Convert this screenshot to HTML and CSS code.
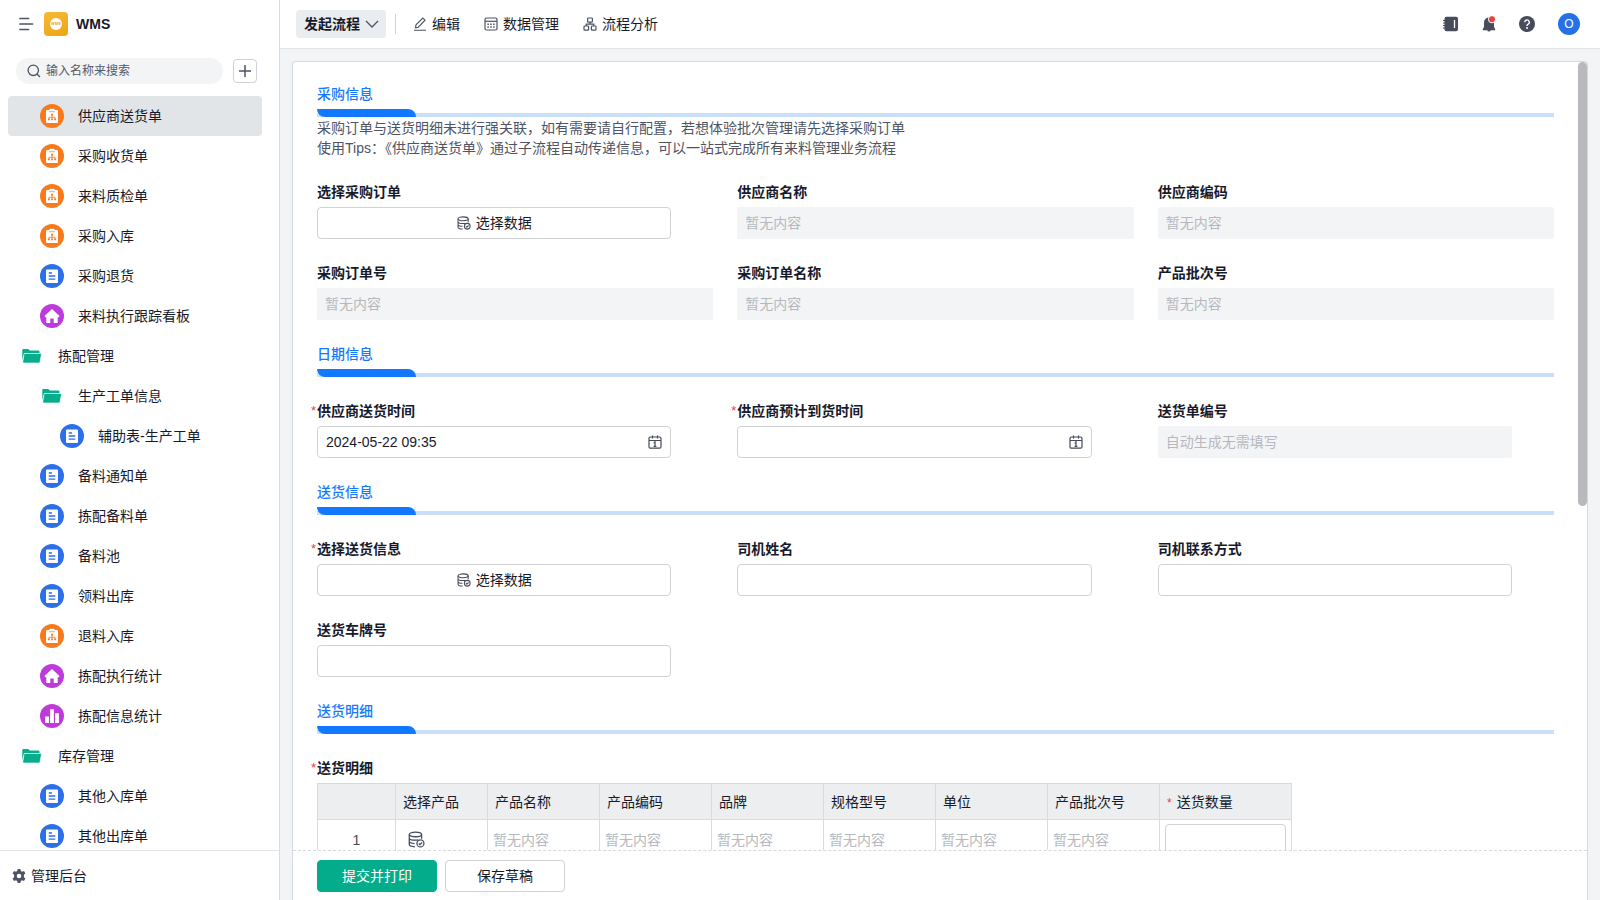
FILE: index.html
```html
<!DOCTYPE html>
<html lang="zh-CN">
<head>
<meta charset="utf-8">
<meta name="viewport" content="width=device-width, initial-scale=1">
<title>WMS</title>
<link rel="stylesheet" href="styles.css">
</head>
<body>
<svg class="sprite" aria-hidden="true">
  <symbol id="i-flow" viewBox="0 0 24 24">
    <circle cx="12" cy="12" r="12" fill="#f9791d"/>
    <path d="M7 6h10a1 1 0 0 1 1 1v11a1 1 0 0 1-1 1H7a1 1 0 0 1-1-1V7a1 1 0 0 1 1-1z" fill="#fff"/>
    <path d="M9.500 4.800h5v2.400h-5z" fill="#fff"/>
    <path d="M9 7.700h6" stroke="#f9791d" stroke-width=".7"/>
    <path d="M12 11v3.500M8.900 15v-1.700h6.200V15" fill="none" stroke="#f9791d" stroke-width=".8"/>
    <path d="M11 9.800h2v1.700h-2zM8 14.600h1.800v1.700H8zM11.100 14.600h1.800v1.700h-1.800zM14.200 14.600H16v1.700h-1.800z" fill="#f9791d"/>
  </symbol>
  <symbol id="i-form" viewBox="0 0 24 24">
    <circle cx="12" cy="12" r="12" fill="#2c6fe6"/>
    <rect x="6" y="5.500" width="12" height="13.500" rx="1" fill="#fff"/>
    <path d="M8.700 9h3.300M8.700 12h6.600M8.700 15.200h6.600" stroke="#2c6fe6" stroke-width="1.300"/>
  </symbol>
  <symbol id="i-home" viewBox="0 0 24 24">
    <circle cx="12" cy="12" r="12" fill="#bd3bdb"/>
    <path d="M12 5l7.500 7-.8 1.200H17.700V19h-4v-4.500h-3.400V19h-4v-5.800H5.300L4.500 12z" fill="#fff"/>
  </symbol>
  <symbol id="i-chart" viewBox="0 0 24 24">
    <circle cx="12" cy="12" r="12" fill="#bd3bdb"/>
    <path d="M5.200 12.500h3.800V19H5.200zM10.100 5.200h3.800V19h-3.800zM15.100 9.200h3.800V19h-3.800z" fill="#fff"/>
  </symbol>
  <symbol id="i-folder" viewBox="0 0 24 24">
    <path d="M2.300 6a1 1 0 0 1 1-1h5l1.500 1.500H18.500a1 1 0 0 1 1 1V9H4.300L2.300 16z" fill="#08ae8b"/>
    <path d="M4.800 9.500H20.600a.8.8 0 0 1 .8 1L20 18a1.200 1.200 0 0 1-1.200 1H3.800a1 1 0 0 1-1-1.200l1.200-7.500a1 1 0 0 1 .8-.8z" fill="#08ae8b" stroke="#fff" stroke-width=".6"/>
  </symbol>
  <symbol id="i-data" viewBox="0 0 16 16">
    <g fill="none" stroke="currentColor" stroke-width="1.200">
      <ellipse cx="7" cy="3.200" rx="5.800" ry="2.200"/>
      <path d="M1.200 3.200v9.600c0 1.100 2.400 2 5.300 2.100M12.800 3.200v4M1.200 6.500c0 1.200 2.600 2.100 5.800 2.100 1 0 1.800-.1 2.500-.3M1.200 9.700c0 1.100 2.200 2 5 2.100"/>
      <circle cx="11.700" cy="11.700" r="3.300"/>
      <path d="M10.200 11.700l1.100 1.100 1.900-2"/>
    </g>
  </symbol>
  <symbol id="i-calendar" viewBox="0 0 16 16">
    <g fill="none" stroke="currentColor" stroke-width="1.200">
      <rect x="2" y="3" width="12" height="11.200" rx="1.500"/>
      <path d="M2 6.500h12M5.500 1.500v3M10.500 1.500v3M6.600 8.800H8M8 6.500v6M6.600 12.300h2.800"/>
    </g>
  </symbol>
</svg>

<div class="app">
  <aside class="sidebar">
    <header class="brand">
      <button class="icon-btn" type="button" aria-label="收起菜单">
        <svg width="16" height="16" viewBox="0 0 16 16"><path d="M2 2.500h8.500M2 8h12.500M2 13.500h8.500" stroke="#4d5362" stroke-width="1.700" stroke-linecap="round"/></svg>
      </button>
      <span class="logo"><span class="logo-mark">WMS</span></span>
      <strong class="brand-name">WMS</strong>
    </header>

    <div class="search-row">
      <label class="search">
        <svg width="14" height="14" viewBox="0 0 14 14" fill="none" stroke="#4d5362" stroke-width="1.300"><circle cx="6.300" cy="6.300" r="5.200"/><path d="M10 10l3 3"/></svg>
        <input type="search" placeholder="输入名称来搜索" aria-label="输入名称来搜索">
      </label>
      <button class="add" type="button" aria-label="新增">
        <svg width="14" height="14" viewBox="0 0 14 14"><path d="M7 1v12M1 7h12" stroke="#4d5362" stroke-width="1.500"/></svg>
      </button>
    </div>

    <nav class="tree">
      <a class="node depth-1 active" href="#"><svg class="node-icon"><use href="#i-flow"/></svg>供应商送货单</a>
      <a class="node depth-1" href="#"><svg class="node-icon"><use href="#i-flow"/></svg>采购收货单</a>
      <a class="node depth-1" href="#"><svg class="node-icon"><use href="#i-flow"/></svg>来料质检单</a>
      <a class="node depth-1" href="#"><svg class="node-icon"><use href="#i-flow"/></svg>采购入库</a>
      <a class="node depth-1" href="#"><svg class="node-icon"><use href="#i-form"/></svg>采购退货</a>
      <a class="node depth-1" href="#"><svg class="node-icon"><use href="#i-home"/></svg>来料执行跟踪看板</a>
      <a class="node" href="#"><svg class="node-icon"><use href="#i-folder"/></svg>拣配管理</a>
      <a class="node depth-1" href="#"><svg class="node-icon"><use href="#i-folder"/></svg>生产工单信息</a>
      <a class="node depth-2" href="#"><svg class="node-icon"><use href="#i-form"/></svg>辅助表-生产工单</a>
      <a class="node depth-1" href="#"><svg class="node-icon"><use href="#i-form"/></svg>备料通知单</a>
      <a class="node depth-1" href="#"><svg class="node-icon"><use href="#i-form"/></svg>拣配备料单</a>
      <a class="node depth-1" href="#"><svg class="node-icon"><use href="#i-form"/></svg>备料池</a>
      <a class="node depth-1" href="#"><svg class="node-icon"><use href="#i-form"/></svg>领料出库</a>
      <a class="node depth-1" href="#"><svg class="node-icon"><use href="#i-flow"/></svg>退料入库</a>
      <a class="node depth-1" href="#"><svg class="node-icon"><use href="#i-home"/></svg>拣配执行统计</a>
      <a class="node depth-1" href="#"><svg class="node-icon"><use href="#i-chart"/></svg>拣配信息统计</a>
      <a class="node" href="#"><svg class="node-icon"><use href="#i-folder"/></svg>库存管理</a>
      <a class="node depth-1" href="#"><svg class="node-icon"><use href="#i-form"/></svg>其他入库单</a>
      <a class="node depth-1" href="#"><svg class="node-icon"><use href="#i-form"/></svg>其他出库单</a>
    </nav>

    <a class="admin" href="#">
      <svg width="14" height="14" viewBox="0 0 14 14"><path fill-rule="evenodd" fill="#4d5362" d="M5.600 0h2.800l.4 1.900 1.300.8 1.900-.6 1.400 2.400-1.500 1.300v2.400l1.500 1.300-1.400 2.400-1.900-.6-1.300.8-.4 1.900H5.600l-.4-1.900-1.300-.8-1.900.6L.6 9.500l1.500-1.300V5.800L.6 4.500 2 2.100l1.900.6 1.300-.8zM7 4.700a2.300 2.300 0 1 0 0 4.600 2.300 2.300 0 0 0 0-4.600z"/></svg>
      管理后台
    </a>
  </aside>

  <div class="main">
    <header class="topbar">
      <button class="start" type="button">发起流程
        <svg width="14" height="14" viewBox="0 0 14 14"><path d="M1 4l6 6 6-6" fill="none" stroke="#4d5362" stroke-width="1.300"/></svg>
      </button>
      <span class="divider"></span>
      <nav class="tabs">
        <a class="tab" href="#"><svg width="14" height="14" viewBox="0 0 14 14" fill="none" stroke="#4d5362" stroke-width="1.100"><path d="M1 13.300h12M2.500 10.800l.5-3L9.800 1l2.200 2.200-6.700 7z"/></svg>编辑</a>
        <a class="tab" href="#"><svg width="14" height="14" viewBox="0 0 14 14" fill="none" stroke="#4d5362" stroke-width="1.200"><rect x="1" y="1" width="12" height="12" rx="1.500"/><path d="M1 4.300h12"/><path d="M3.400 7.200h7.200M3.400 10h7.200" stroke-width="1.500" stroke-dasharray="1.500 1.350"/></svg>数据管理</a>
        <a class="tab" href="#"><svg width="14" height="14" viewBox="0 0 14 14" fill="none" stroke="#4d5362" stroke-width="1.200"><rect x="4.600" y="1" width="4.800" height="4.200" rx=".8"/><rect x="1" y="9" width="4.600" height="4.200" rx=".8"/><rect x="8.400" y="9" width="4.600" height="4.200" rx=".8"/><path d="M7 5.200v1.900M3.200 9V7.100h7.600V9"/></svg>流程分析</a>
      </nav>
      <div class="tools">
        <button class="icon-btn" type="button" aria-label="通讯录"><svg width="16" height="16" viewBox="0 0 16 16"><path d="M3.500 .800h9.500a2 2 0 0 1 2 2v10.500a2 2 0 0 1-2 2H3.500a2 2 0 0 1-2-2v-10.500a2 2 0 0 1 2-2z" fill="#474b5a"/><path d="M0 4.500h3M0 7h3M0 9.500h3M0 12h3" stroke="#474b5a"/><path d="M11.500 4v8" stroke="#fff" stroke-width="1.300"/></svg></button>
        <button class="icon-btn" type="button" aria-label="消息"><svg width="16" height="16" viewBox="0 0 16 16"><path d="M8 1.500a5 5 0 0 1 5 5v4.500l1.200 2v1.200h-4.400a1.900 1.900 0 0 1-3.600 0H1.800V13L3 11V6.500a5 5 0 0 1 5-5z" fill="#474b5a"/><circle cx="11" cy="3.200" r="3.600" fill="#e6413e" stroke="#fff"/></svg></button>
        <button class="icon-btn" type="button" aria-label="帮助"><svg width="16" height="16" viewBox="0 0 16 16"><circle cx="8" cy="8" r="8" fill="#474b5a"/><path d="M5.700 6.300a2.300 2.300 0 1 1 3.500 1.900c-.8.5-1.200.8-1.200 1.700" fill="none" stroke="#fff" stroke-width="1.400"/><circle cx="8" cy="12" r="1" fill="#fff"/></svg></button>
        <button class="avatar" type="button">O</button>
      </div>
    </header>

    <div class="page">
      <form class="card">
        <div class="scroller">
          <section class="heading">
            <h2>采购信息</h2>
            <div class="rule"></div>
            <p>采购订单与送货明细未进行强关联，如有需要请自行配置，若想体验批次管理请先选择采购订单<br>使用Tips：《供应商送货单》通过子流程自动传递信息，可以一站式完成所有来料管理业务流程</p>
          </section>

          <div class="grid">
            <div class="field"><label for="order">选择采购订单</label><button id="order" class="control pick" type="button"><svg width="14" height="14"><use href="#i-data"/></svg>选择数据</button></div>
            <div class="field"><label for="sname">供应商名称</label><input id="sname" class="control empty wide" readonly placeholder="暂无内容"></div>
            <div class="field"><label for="scode">供应商编码</label><input id="scode" class="control empty wide" readonly placeholder="暂无内容"></div>
            <div class="field"><label for="ono">采购订单号</label><input id="ono" class="control empty wide" readonly placeholder="暂无内容"></div>
            <div class="field"><label for="oname">采购订单名称</label><input id="oname" class="control empty wide" readonly placeholder="暂无内容"></div>
            <div class="field"><label for="batch">产品批次号</label><input id="batch" class="control empty wide" readonly placeholder="暂无内容"></div>
          </div>

          <section class="heading"><h2>日期信息</h2><div class="rule"></div></section>

          <div class="grid">
            <div class="field required"><label for="sent">供应商送货时间</label><div class="control date"><input id="sent" type="text" value="2024-05-22 09:35"><svg width="16" height="16"><use href="#i-calendar"/></svg></div></div>
            <div class="field required"><label for="eta">供应商预计到货时间</label><div class="control date"><input id="eta" type="text"><svg width="16" height="16"><use href="#i-calendar"/></svg></div></div>
            <div class="field"><label for="dno">送货单编号</label><input id="dno" class="control empty" readonly placeholder="自动生成无需填写"></div>
          </div>

          <section class="heading"><h2>送货信息</h2><div class="rule"></div></section>

          <div class="grid">
            <div class="field required"><label for="info">选择送货信息</label><button id="info" class="control pick" type="button"><svg width="14" height="14"><use href="#i-data"/></svg>选择数据</button></div>
            <div class="field"><label for="driver">司机姓名</label><input id="driver" class="control" type="text"></div>
            <div class="field"><label for="phone">司机联系方式</label><input id="phone" class="control" type="text"></div>
            <div class="field"><label for="plate">送货车牌号</label><input id="plate" class="control" type="text"></div>
          </div>

          <section class="heading"><h2>送货明细</h2><div class="rule"></div></section>

          <div class="field required">
            <span class="label" id="detail">送货明细</span>
            <table class="detail" aria-labelledby="detail">
              <colgroup><col class="c-index"><col class="c-pick"><col class="c-text" span="6"><col class="c-qty"></colgroup>
              <thead>
                <tr><th></th><th>选择产品</th><th>产品名称</th><th>产品编码</th><th>品牌</th><th>规格型号</th><th>单位</th><th>产品批次号</th><th><span class="star">*</span>送货数量</th></tr>
              </thead>
              <tbody>
                <tr>
                  <td class="index">1</td>
                  <td class="pick-cell"><button class="icon-btn" type="button" aria-label="选择产品"><svg width="17" height="17"><use href="#i-data"/></svg></button></td>
                  <td>暂无内容</td><td>暂无内容</td><td>暂无内容</td><td>暂无内容</td><td>暂无内容</td><td>暂无内容</td>
                  <td><input class="qty" type="text" aria-label="送货数量"></td>
                </tr>
              </tbody>
            </table>
          </div>
        </div>
        <div class="thumb"></div>
        <footer class="actions">
          <button class="btn primary" type="submit">提交并打印</button>
          <button class="btn" type="button">保存草稿</button>
        </footer>
      </form>
    </div>
  </div>
</div>
</body>
</html>
```
FILE: styles.css
```css
* { box-sizing: border-box; }

body {
  margin: 0;
  background: #f2f4f6;
  color: #171a2b;
  font: 14px/20px "Liberation Sans", "Noto Sans CJK SC", sans-serif;
}

button, input { font: inherit; color: inherit; }
button { padding: 0; cursor: pointer; }
a { color: inherit; text-decoration: none; }
svg { flex: none; display: block; }
.sprite { position: absolute; width: 0; height: 0; }

.app { display: flex; height: 100vh; }

.icon-btn { display: flex; padding: 0; border: 0; background: none; color: #474b5a; }

/* Sidebar */
.sidebar {
  display: flex;
  flex-direction: column;
  flex: none;
  width: 280px;
  border-right: 1px solid #d9dcdf;
  background: #fff;
}
.brand { display: flex; align-items: center; height: 48px; padding-left: 18px; }
.logo {
  display: grid;
  place-items: center;
  width: 24px;
  height: 24px;
  margin: 0 8px 0 10px;
  border-radius: 4px;
  background: linear-gradient(160deg, #f5b93a, #eca612);
}
.logo-mark {
  width: 12px;
  height: 12px;
  border-radius: 50%;
  background: #fff;
  color: #eca612;
  font-size: 4px;
  font-weight: 700;
  line-height: 12px;
  text-align: center;
}
.brand-name { font-size: 14px; }

.search-row { display: flex; align-items: center; gap: 10px; padding: 10px 22px 12px 16px; }
.search {
  display: flex;
  flex: 1;
  align-items: center;
  gap: 5px;
  height: 26px;
  padding: 0 11px;
  border-radius: 13px;
  background: #f2f4f5;
}
.search input {
  flex: 1;
  min-width: 0;
  padding: 0;
  border: 0;
  outline: 0;
  background: none;
  font-size: 12px;
}
.search input::placeholder { color: #565a68; }
.add {
  display: grid;
  place-items: center;
  width: 24px;
  height: 24px;
  border: 1px solid #cfd2d6;
  border-radius: 4px;
  background: #fff;
}

.tree { flex: 1; min-height: 0; padding: 0 17px 0 8px; overflow: hidden; }
.node {
  display: flex;
  align-items: center;
  gap: 14px;
  height: 40px;
  padding-left: 12px;
  border-radius: 4px;
}
.node-icon { width: 24px; height: 24px; }
.depth-1 { padding-left: 32px; }
.depth-2 { padding-left: 52px; }
.active { background: #e1e5e8; }

.admin {
  display: flex;
  align-items: center;
  gap: 5px;
  height: 50px;
  padding-left: 12px;
  border-top: 1px solid #e2e4e6;
}

/* Top bar */
.main { display: flex; flex: 1; flex-direction: column; min-width: 0; }
.topbar {
  display: flex;
  align-items: center;
  flex: none;
  height: 49px;
  padding: 0 20px 0 16px;
  border-bottom: 1px solid #e2e5e8;
  background: #fff;
}
.start {
  display: flex;
  align-items: center;
  gap: 5px;
  height: 28px;
  padding: 0 7px 0 8px;
  border: 0;
  border-radius: 4px;
  background: #e9edf0;
  font-weight: 700;
}
.divider { width: 1px; height: 20px; margin: 0 17px 0 9px; background: #cfd2d6; }
.tabs { display: flex; gap: 24px; }
.tab { display: flex; align-items: center; gap: 5px; }
.tools { display: flex; align-items: center; gap: 22px; margin-left: auto; }
.avatar {
  width: 22px;
  height: 22px;
  margin-left: 1px;
  border: 0;
  border-radius: 50%;
  background: #2670e8;
  color: #fff;
  font-size: 12px;
}

/* Form card */
.page { flex: 1; min-height: 0; padding: 12px 12px 0; }
.card {
  position: relative;
  display: flex;
  flex-direction: column;
  height: 100%;
  border: 1px solid #d6dade;
  border-bottom: 0;
  border-radius: 4px 4px 0 0;
  background: #fff;
}
.scroller {
  display: flex;
  flex: 1;
  flex-direction: column;
  gap: 24px;
  min-height: 0;
  padding: 22px 33px 0 24px;
  overflow: hidden;
}
.scroller > * { flex: none; }
.thumb {
  position: absolute;
  top: 0;
  right: 0;
  width: 9px;
  height: 53%;
  border-radius: 5px;
  background: #b7b9bd;
}

.heading h2 { margin: 0 0 5px; color: #157aff; font-size: 14px; font-weight: 500; line-height: 20px; }
.heading p { margin: 1px 0 0; color: #4f5362; }
.rule {
  height: 8px;
  background: linear-gradient(#c9e0f8, #c9e0f8) bottom / 100% 4px no-repeat;
}
.rule::before {
  display: block;
  width: 8%;
  height: 8px;
  border-radius: 0 8px 0 8px;
  background: #1278ff;
  content: "";
}

.grid { display: grid; grid-template-columns: repeat(3, 1fr); gap: 24px; }
.field { display: flex; flex-direction: column; gap: 5px; min-width: 0; }
.field label, .label { position: relative; font-weight: 700; }
.required label::before, .required .label::before {
  position: absolute;
  left: -6px;
  color: #e6413e;
  font-size: 13px;
  font-weight: 400;
  content: "*";
}
.control {
  width: calc(100% - 42px);
  height: 32px;
  padding: 0 8px;
  border: 1px solid #d0d2d6;
  border-radius: 4px;
  background: #fff;
}
.control.wide { width: 100%; }
.empty { border-color: #f3f4f6; border-radius: 2px; background: #f3f4f6; }
.empty.control { padding: 0 7px; }
.empty::placeholder { color: #b6b8be; }
.pick { display: flex; align-items: center; justify-content: center; gap: 5px; }
.pick svg { color: #474b5a; }
.date { display: flex; align-items: center; padding-right: 7px; color: #474b5a; }
.date input { flex: 1; min-width: 0; padding: 0; border: 0; outline: 0; background: none; color: #171a2b; }

.detail { width: 975px; table-layout: fixed; border-collapse: collapse; }
.c-index { width: 78px; }
.c-pick { width: 92px; }
.c-text { width: 112px; }
.c-qty { width: 132px; }
.detail th, .detail td { border: 1px solid #d8dbde; text-align: left; }
.detail th { height: 36px; padding: 0 7px; background: #eceef0; font-weight: 400; }
.detail td { height: 40px; padding: 0 5px; color: #b6b8be; }
.detail .index { color: #474b5a; text-align: center; }
.detail .pick-cell { padding-left: 12px; }
.star { margin-right: 5px; color: #e6413e; font-size: 12px; line-height: 1; }
.qty {
  display: block;
  width: 100%;
  height: 32px;
  border: 1px solid #d0d2d6;
  border-radius: 4px;
  background: #fff;
}

.actions {
  display: flex;
  flex: none;
  gap: 8px;
  padding: 9px 24px 8px;
  border-top: 1px dashed #d6dade;
}
.btn {
  width: 120px;
  height: 32px;
  border: 1px solid #d0d2d6;
  border-radius: 4px;
  background: #fff;
}
.primary { border-color: #03ad8b; background: #03ad8b; color: #fff; }
```
